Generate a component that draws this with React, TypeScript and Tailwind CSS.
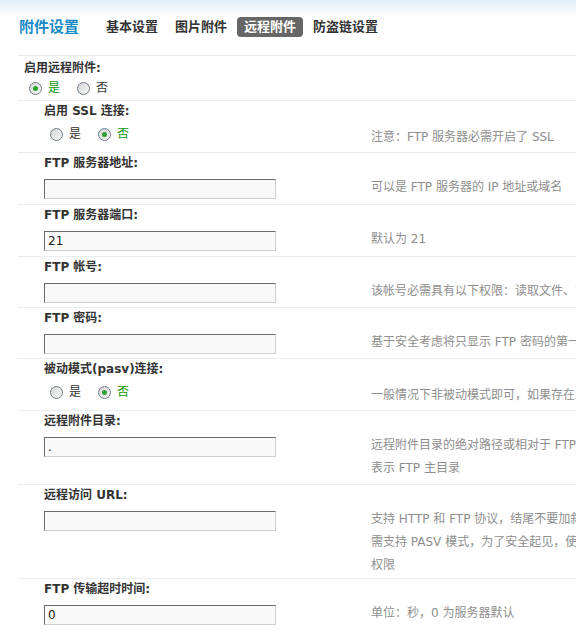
import React from "react";

const FONT = "font-['DejaVu_Sans','Noto_Sans_CJK_SC',sans-serif]";

function Radio({ checked }: { checked: boolean }) {
  return (
    <span className="inline-flex h-[13px] w-[13px] shrink-0 items-center justify-center rounded-full border border-[#6f7c88] bg-[linear-gradient(135deg,#d2d4d6,#f8f8f8)]">
      {checked && <span className="h-[5px] w-[5px] rounded-full bg-[#2da12d]" />}
    </span>
  );
}

function RadioGroup({ value }: { value: "yes" | "no" }) {
  const opts: { key: "yes" | "no"; text: string }[] = [
    { key: "yes", text: "是" },
    { key: "no", text: "否" },
  ];
  return (
    <div className="flex h-[20px] items-center">
      {opts.map((o) => (
        <label key={o.key} className="mr-[17px] flex items-center">
          <Radio checked={value === o.key} />
          <span
            className={`ml-[6px] text-[12px] ${
              value === o.key ? "text-[#119911]" : "text-[#333]"
            }`}
          >
            {o.text}
          </span>
        </label>
      ))}
    </div>
  );
}

function TextInput({ value }: { value?: string }) {
  return (
    <div className="mt-[3px] flex h-[20px] w-[232px] items-center border border-t-[#6a6a6a] border-l-[#6a6a6a] border-r-[#cfcfcf] border-b-[#cfcfcf] bg-[#f9f9f9] px-[3px] text-[12px] text-[#222]">
      {value}
    </div>
  );
}

type RowProps = {
  label: string;
  control: React.ReactNode;
  note: string[];
  radio?: boolean;
  pb: string;
};

function Row({ label, control, note, radio, pb }: RowProps) {
  return (
    <div className={`ml-[18px] border-t border-[#e9eef2] ${pb}`}>
      <div className="h-[20px] pl-[26px] text-[12px] font-bold leading-[20px] text-[#333]">
        {label}
      </div>
      <div className="mt-[3px] flex">
        <div className={`w-[353px] shrink-0 ${radio ? "pl-[32px]" : "pl-[26px]"}`}>
          {control}
        </div>
        <div className={`whitespace-nowrap text-[12px] leading-[23px] text-[#8e8e8e] ${radio ? "mt-[2px]" : ""}`}>
          {note.map((line, i) => (
            <div key={i}>{line}</div>
          ))}
        </div>
      </div>
    </div>
  );
}

const tabs = ["基本设置", "图片附件", "远程附件", "防盗链设置"];

export default function App() {
  return (
    <div className={`min-h-screen w-full overflow-hidden bg-white ${FONT}`}>
      {/* page title and tab strip */}
      <div className="flex items-center bg-[linear-gradient(to_bottom,#e3eff9,#ffffff_18px)] pb-[18px] pl-[19px] pt-[17px]">
        <h3 className="text-[15px] font-bold leading-[20px] text-[#1a8bc6]">附件设置</h3>
        <div className="ml-[20px] flex items-center gap-[3px]">
          {tabs.map((t) => (
            <span
              key={t}
              className={`h-[20px] rounded-[4px] px-[7px] text-[13px] font-bold leading-[20px] ${
                t === "远程附件" ? "bg-[#666] text-white" : "text-[#333]"
              }`}
            >
              {t}
            </span>
          ))}
        </div>
      </div>

      {/* master switch */}
      <div className="ml-[18px] border-t border-[#e9eef2] pb-[2px] pt-[2px]">
        <div className="h-[20px] pl-[6px] text-[12px] font-bold leading-[20px] text-[#333]">
          启用远程附件:
        </div>
        <div className="pl-[11px]">
          <RadioGroup value="yes" />
        </div>
      </div>

      <Row
        label="启用 SSL 连接:"
        radio
        pb="pb-[3px]"
        control={<RadioGroup value="no" />}
        note={["注意：FTP 服务器必需开启了 SSL"]}
      />
      <Row
        label="FTP 服务器地址:"
        pb="pb-[5px]"
        control={<TextInput />}
        note={["可以是 FTP 服务器的 IP 地址或域名"]}
      />
      <Row
        label="FTP 服务器端口:"
        pb="pb-[5px]"
        control={<TextInput value="21" />}
        note={["默认为 21"]}
      />
      <Row
        label="FTP 帐号:"
        pb="pb-[4px]"
        control={<TextInput />}
        note={["该帐号必需具有以下权限：读取文件、写入文件、删除文件、创建目录、子目录继承"]}
      />
      <Row
        label="FTP 密码:"
        pb="pb-[4px]"
        control={<TextInput />}
        note={["基于安全考虑将只显示 FTP 密码的第一位和最后一位，中间显示八个 * 号"]}
      />
      <Row
        label="被动模式(pasv)连接:"
        radio
        pb="pb-[3px]"
        control={<RadioGroup value="no" />}
        note={["一般情况下非被动模式即可，如果存在上传失败问题，可尝试打开此设置"]}
      />
      <Row
        label="远程附件目录:"
        pb="pb-[4px]"
        control={<TextInput value="." />}
        note={[
          "远程附件目录的绝对路径或相对于 FTP 主目录的相对路径，结尾不要加斜杠“/”，“.”",
          "表示 FTP 主目录",
        ]}
      />
      <Row
        label="远程访问 URL:"
        pb="pb-[1px]"
        control={<TextInput />}
        note={[
          "支持 HTTP 和 FTP 协议，结尾不要加斜杠“/”；如果使用 FTP 协议，FTP 服务器必",
          "需支持 PASV 模式，为了安全起见，使用 FTP 连接的帐号不要设置可写权限和列表",
          "权限",
        ]}
      />
      <Row
        label="FTP 传输超时时间:"
        pb="pb-[5px]"
        control={<TextInput value="0" />}
        note={["单位：秒，0 为服务器默认"]}
      />
    </div>
  );
}
